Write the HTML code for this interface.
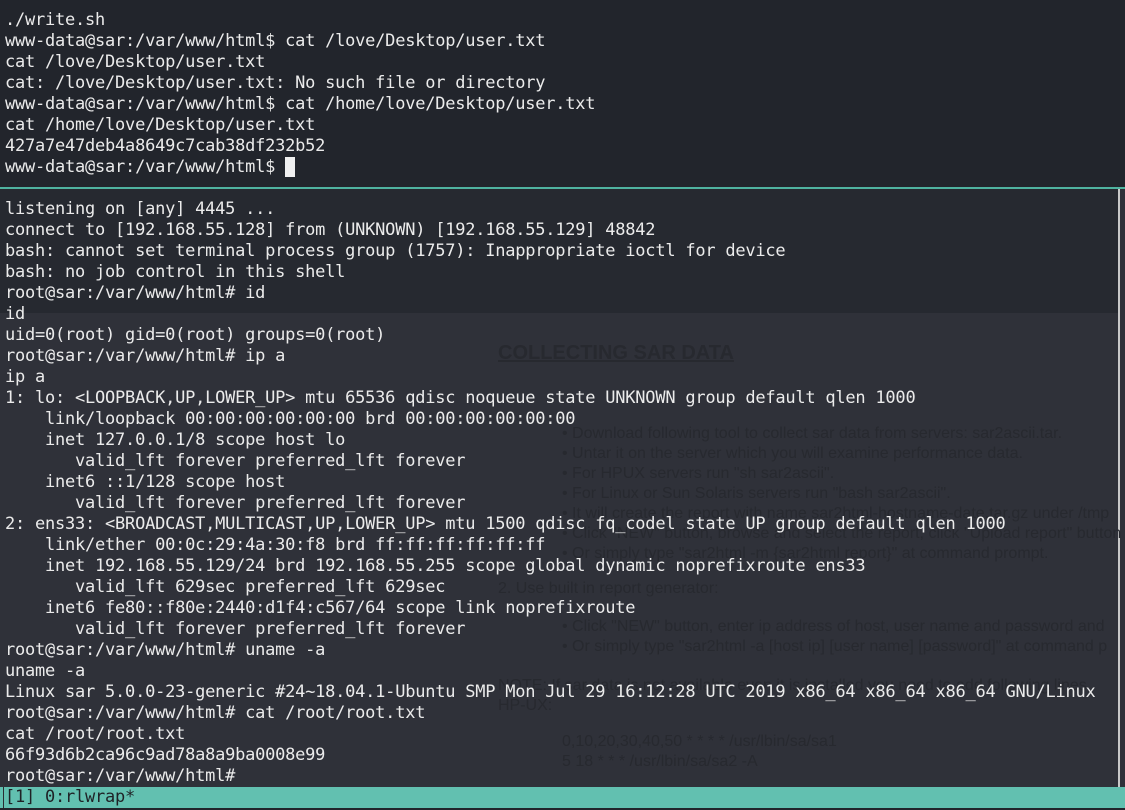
<!DOCTYPE html>
<html><head><meta charset="utf-8"><style>
html,body{margin:0;padding:0;width:1125px;height:810px;overflow:hidden;background:#22252c}
.t{position:absolute;left:5px;margin:0;font-family:"DejaVu Sans Mono","Liberation Mono",monospace;font-size:17px;letter-spacing:-0.23px;line-height:21px;color:#ebebeb;white-space:pre}
.bg{position:absolute;font-family:"Liberation Sans",sans-serif;color:#27292f;white-space:pre;font-size:16px}
</style></head><body>
<div style="position:absolute;left:0;top:0;width:1125px;height:187px;background:#22252c"></div>
<div style="position:absolute;left:0;top:187px;width:1125px;height:2px;background:#4fb3a0"></div>
<div style="position:absolute;left:0;top:189px;width:1118px;height:124px;background:#262930"></div>
<div style="position:absolute;left:0;top:313px;width:1118px;height:474px;background:#2f3139"></div>
<div style="position:absolute;left:1118px;top:189px;width:2px;height:598px;background:#c8c8c8"></div>
<div style="position:absolute;left:1120px;top:189px;width:5px;height:598px;background:#2f3139"></div>
<div class="bg" style="left:498px;top:342px;font-size:20px;font-weight:bold;text-decoration:underline">COLLECTING SAR DATA</div>
<div class="bg" style="left:562px;top:424px;line-height:20px">• Download following tool to collect sar data from servers: sar2ascii.tar.
• Untar it on the server which you will examine performance data.
• For HPUX servers run "sh sar2ascii".
• For Linux or Sun Solaris servers run "bash sar2ascii".
• It will create the report with name sar2html-hostname-date.tar.gz under /tmp
• Click "NEW" button, browse and select the report, click "Upload report" button
• Or simply type "sar2html -m {sar2html report}" at command prompt.</div>
<div class="bg" style="left:498px;top:580px">2. Use built in report generator:</div>
<div class="bg" style="left:562px;top:617px;line-height:20px">• Click "NEW" button, enter ip address of host, user name and password and
• Or simply type "sar2html -a [host ip] [user name] [password]" at command p</div>
<div class="bg" style="left:498px;top:676px;line-height:20px">NOTE: If sar data is not available even it is installed you need to add following lines
HP-UX:</div>
<div class="bg" style="left:562px;top:732px;line-height:20px">0,10,20,30,40,50 * * * * /usr/lbin/sa/sa1
5 18 * * * /usr/lbin/sa/sa2 -A</div>
<pre class="t" style="top:10px">./write.sh
www-data@sar:/var/www/html$ cat /love/Desktop/user.txt
cat /love/Desktop/user.txt
cat: /love/Desktop/user.txt: No such file or directory
www-data@sar:/var/www/html$ cat /home/love/Desktop/user.txt
cat /home/love/Desktop/user.txt
427a7e47deb4a8649c7cab38df232b52
www-data@sar:/var/www/html$ <span style="background:#f0f0f0">&#160;</span></pre>
<pre class="t" style="top:199px">listening on [any] 4445 ...
connect to [192.168.55.128] from (UNKNOWN) [192.168.55.129] 48842
bash: cannot set terminal process group (1757): Inappropriate ioctl for device
bash: no job control in this shell
root@sar:/var/www/html# id
id
uid=0(root) gid=0(root) groups=0(root)
root@sar:/var/www/html# ip a
ip a
1: lo: &lt;LOOPBACK,UP,LOWER_UP&gt; mtu 65536 qdisc noqueue state UNKNOWN group default qlen 1000
    link/loopback 00:00:00:00:00:00 brd 00:00:00:00:00:00
    inet 127.0.0.1/8 scope host lo
       valid_lft forever preferred_lft forever
    inet6 ::1/128 scope host
       valid_lft forever preferred_lft forever
2: ens33: &lt;BROADCAST,MULTICAST,UP,LOWER_UP&gt; mtu 1500 qdisc fq_codel state UP group default qlen 1000
    link/ether 00:0c:29:4a:30:f8 brd ff:ff:ff:ff:ff:ff
    inet 192.168.55.129/24 brd 192.168.55.255 scope global dynamic noprefixroute ens33
       valid_lft 629sec preferred_lft 629sec
    inet6 fe80::f80e:2440:d1f4:c567/64 scope link noprefixroute
       valid_lft forever preferred_lft forever
root@sar:/var/www/html# uname -a
uname -a
Linux sar 5.0.0-23-generic #24~18.04.1-Ubuntu SMP Mon Jul 29 16:12:28 UTC 2019 x86_64 x86_64 x86_64 GNU/Linux
root@sar:/var/www/html# cat /root/root.txt
cat /root/root.txt
66f93d6b2ca96c9ad78a8a9ba0008e99
root@sar:/var/www/html#</pre>
<div style="position:absolute;left:0;top:787px;width:1125px;height:21px;background:#62c0b0"></div>
<div style="position:absolute;left:3px;top:787px;width:1px;height:21px;background:#2a2c33"></div>
<pre class="t" style="top:787px;color:#1f2226">[1] 0:rlwrap*</pre>
<div style="position:absolute;left:0;top:808px;width:1125px;height:2px;background:#22252c"></div>
</body></html>
